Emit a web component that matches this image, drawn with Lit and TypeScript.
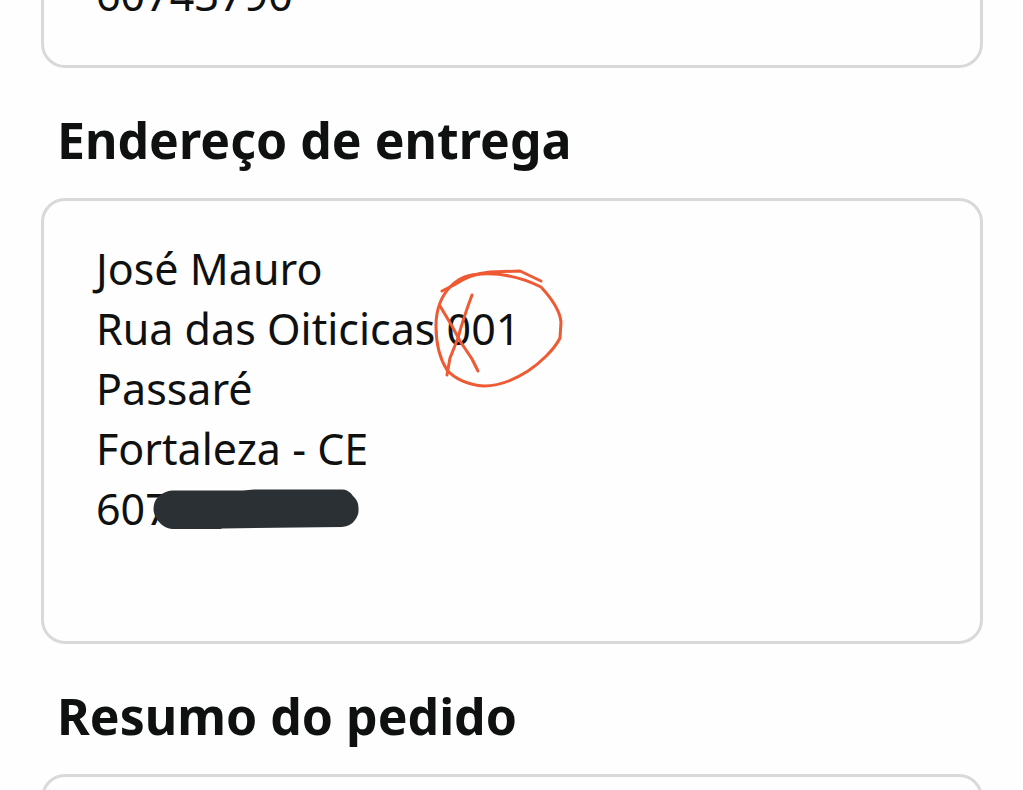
import { LitElement, html, css } from "lit";
import { customElement } from "lit/decorators.js";

@customElement("app-root")
export class AppRoot extends LitElement {
  static styles = css`
    :host { display: block; height: 100vh; overflow: hidden; background: #fefefe; color: #0f1111; font-family: "Noto Sans", sans-serif; }
    .page { padding: 0 40px 0 41px; }
    .card { box-sizing: border-box; border: 3px solid #d8dada; border-radius: 24px; padding: 38px 52px; font-size: 43px; line-height: 60px; }
    .first { border-top: 0; border-top-left-radius: 0; border-top-right-radius: 0; height: 68px; display: flex; align-items: flex-end; padding-top: 0; padding-bottom: 40px; }
    .address { min-height: 446px; }
    .line { margin: 0; white-space: nowrap; }
    h2 { margin: 0; padding: 36px 16px 22px; font-size: 50px; line-height: 72px; font-weight: 700; }
    .marked { position: relative; display: inline-block; }
    .ring { position: absolute; left: -17px; top: -37px; width: 140px; height: 130px; fill: none; stroke: #ee5a33; stroke-width: 3; stroke-linecap: round; stroke-linejoin: round; }
    .masked { position: relative; }
    .mask { position: absolute; left: 57px; top: 10px; width: 206px; height: 40px; fill: #2b3034; }
    .last { min-height: 120px; }
  `;

  render() {
    return html`
      <main class="page">
        <section class="card first"><p class="line">60743790</p></section>
        <h2>Endereço de entrega</h2>
        <section class="card address">
          <p class="line">José Mauro</p>
          <p class="line">Rua das Oiticicas <span class="marked">001<svg class="ring" viewBox="430 262 140 130" aria-hidden="true">
            <path d="M442 291 L454 285 Q470 274 490 272 L520 271 L541 281"/>
            <path d="M482 274 C502 273 523 278 541 287 C553 300 560 311 561 322 L560 338 C554 350 540 363 528 371 C514 380 498 386 484 386 C467 385 454 378 447 370 C440 359 436 343 436 326 C436 311 440 297 451 286 C460 277 471 274 482 274"/>
            <path d="M472 295 Q463 319 458 338 L450 358 L447 375"/>
            <path d="M440 306 L452 326 L460 341 L472 359 L478 371"/>
          </svg></span></p>
          <p class="line">Passaré</p>
          <p class="line">Fortaleza - CE</p>
          <p class="line masked">607<svg class="mask" viewBox="153 489 206 40" aria-hidden="true">
            <path d="M172 490.500 L243 490.500 L254 489.500 L343 489.500 Q349 490 353 496 Q359 501 358.500 509 Q359 515 355 520 Q351 526 342 527 L222 528.500 L221 529 L172 529 Q164 528 159 522 Q153.500 516 153.500 509 Q153.500 501 159 496 Q165 491 172 490.500Z"/>
          </svg></p>
        </section>
        <h2>Resumo do pedido</h2>
        <section class="card last"></section>
      </main>
    `;
  }
}
